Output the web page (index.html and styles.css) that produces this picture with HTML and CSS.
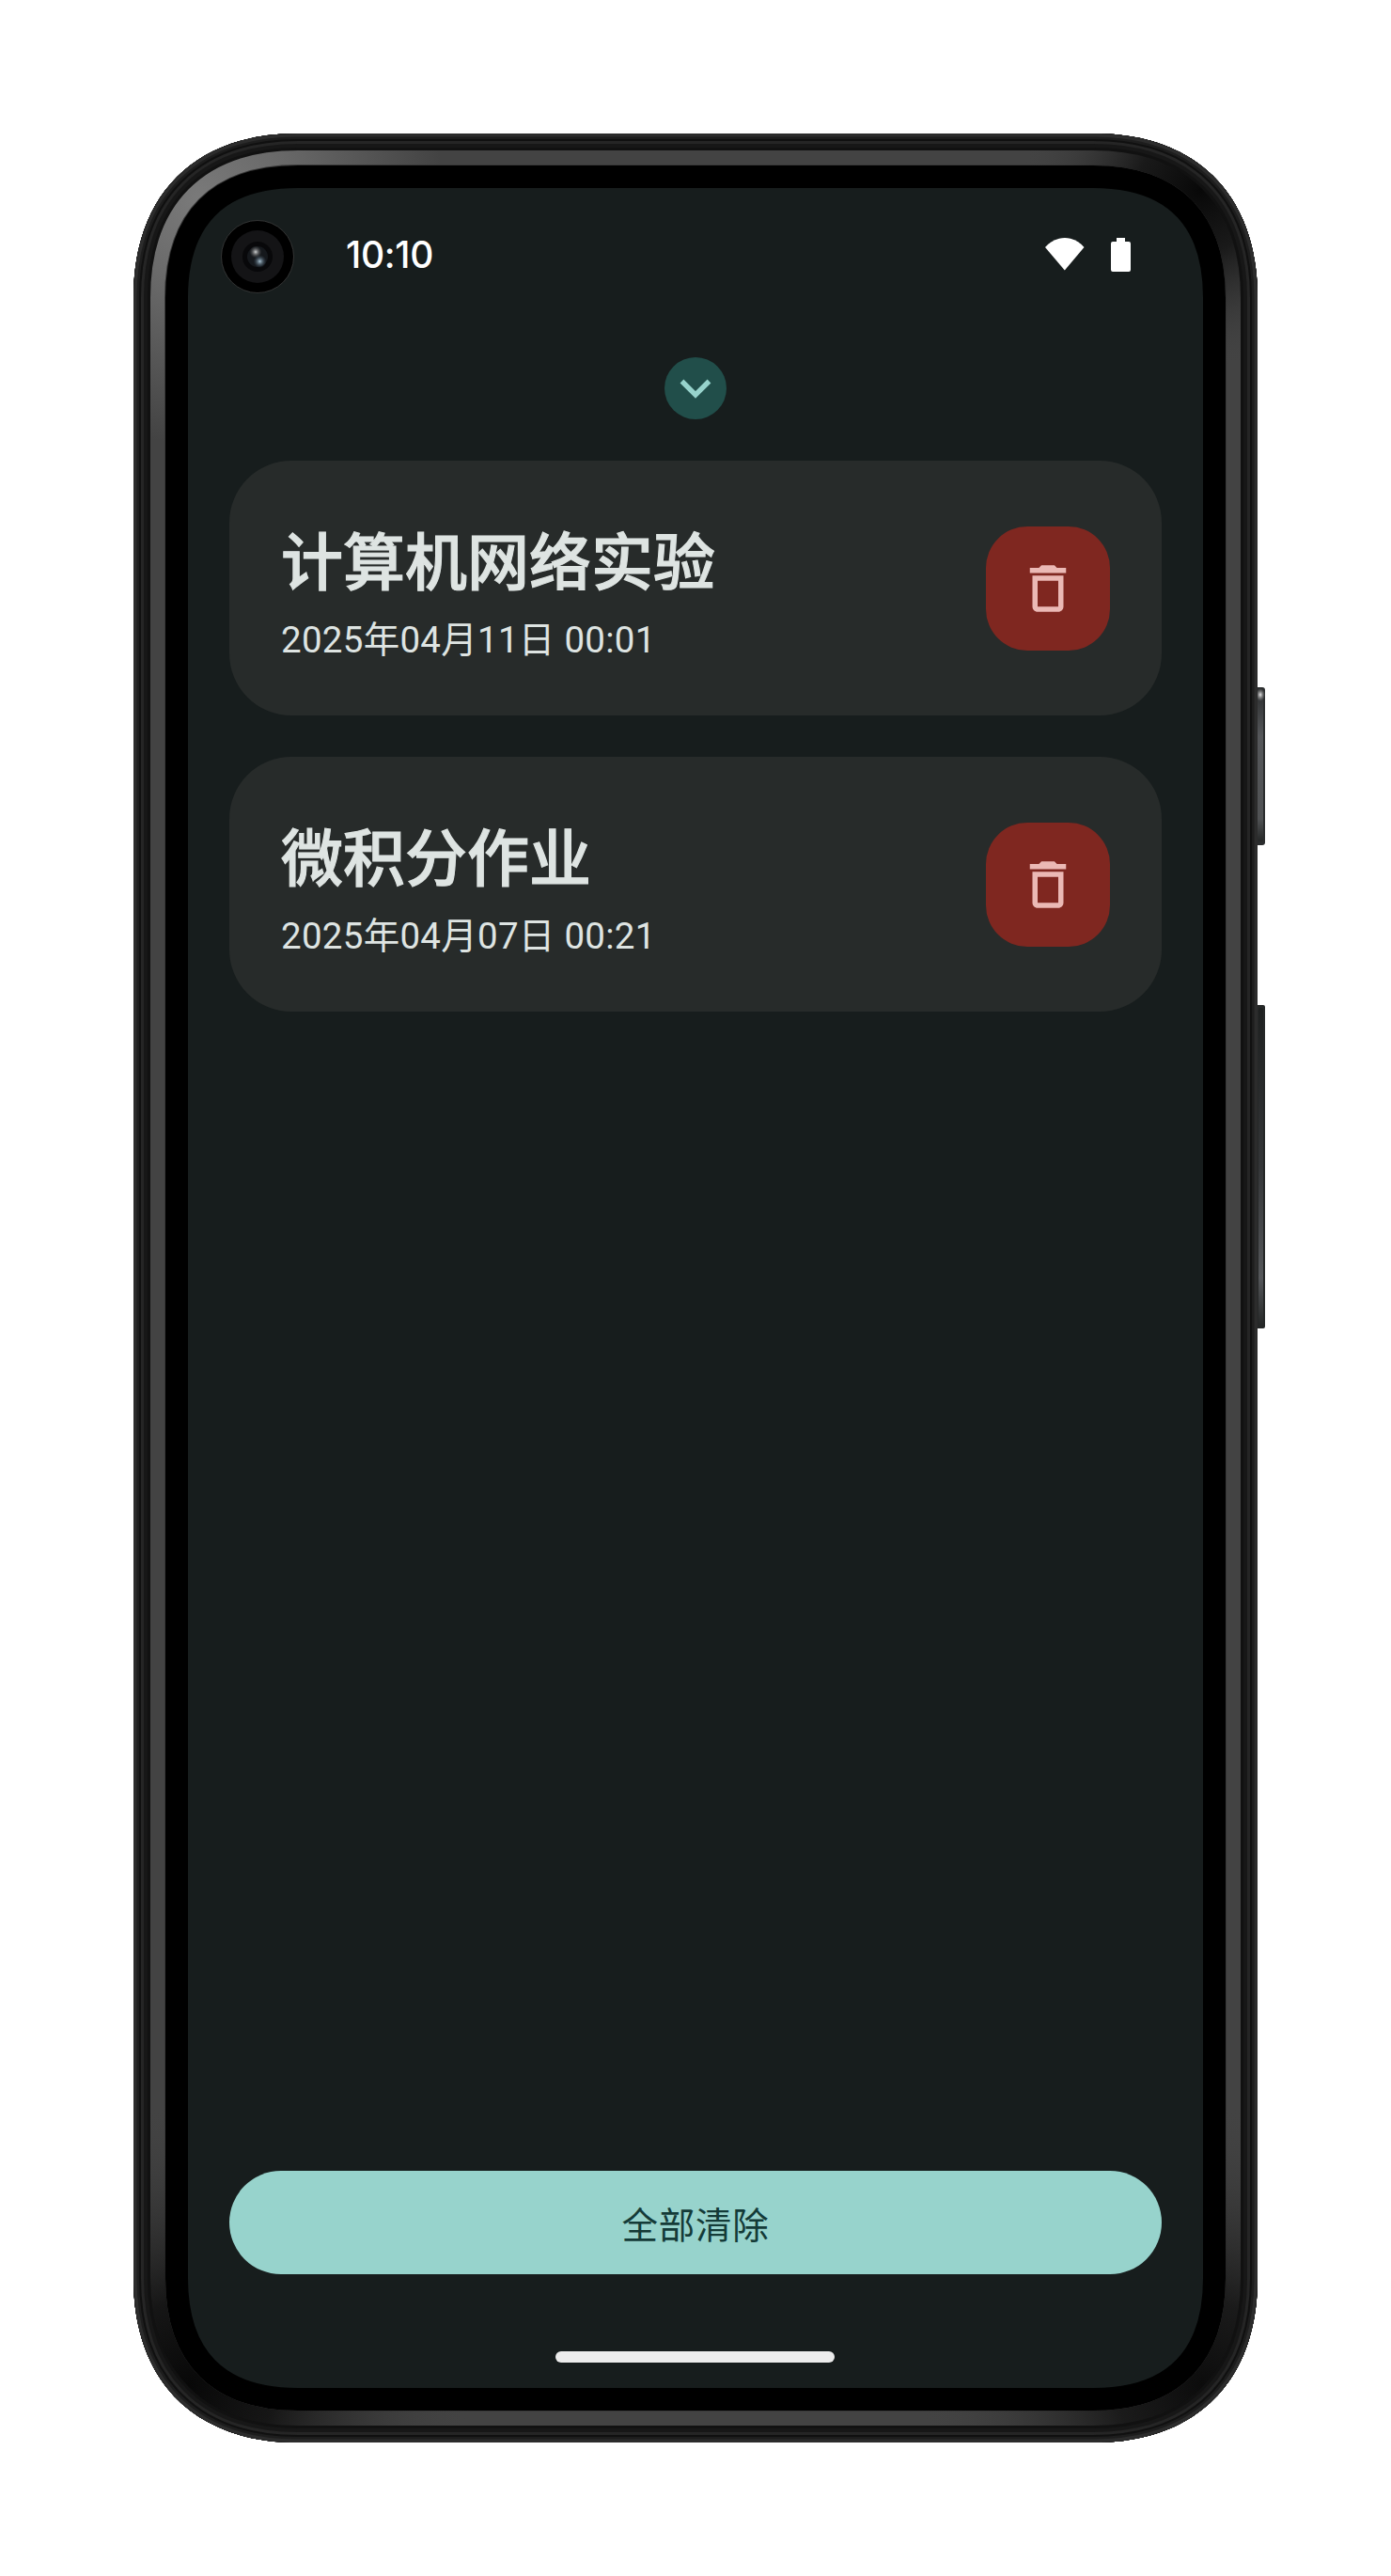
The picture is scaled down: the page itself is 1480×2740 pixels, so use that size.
FILE: index.html
```html
<!DOCTYPE html>
<html lang="zh-CN">
<head>
<meta charset="utf-8">
<title>全部清除</title>
<link rel="stylesheet" href="styles.css">
</head>
<body>
<div class="device">
  <svg class="frame" viewBox="0 0 1210 2456" aria-hidden="true">
    <defs>
      <path id="body" d="M175 0H1021C1131 0 1196 65 1196 175V2281C1196 2391 1131 2456 1021 2456H175C65 2456 0 2391 0 2281V175C0 65 65 0 175 0Z"/>
      <clipPath id="clip"><use href="#body"/></clipPath>
      <radialGradient id="light" gradientUnits="userSpaceOnUse" cx="70" cy="70" r="260"><stop offset="0" stop-color="#7a7a7a"/><stop offset=".35" stop-color="#6a6a6a"/><stop offset="1" stop-color="#434343"/></radialGradient>
      <radialGradient id="darkTop" gradientUnits="userSpaceOnUse" cx="1135" cy="60" r="190"><stop offset="0" stop-color="#080808"/><stop offset=".35" stop-color="#151515" stop-opacity=".9"/><stop offset="1" stop-color="#434343" stop-opacity="0"/></radialGradient>
      <radialGradient id="darkBottom" gradientUnits="userSpaceOnUse" cx="60" cy="2395" r="300"><stop offset="0" stop-color="#080808"/><stop offset=".3" stop-color="#111" stop-opacity=".9"/><stop offset="1" stop-color="#434343" stop-opacity="0"/></radialGradient>
      <radialGradient id="darkRight" gradientUnits="userSpaceOnUse" cx="1136" cy="2395" r="300"><stop offset="0" stop-color="#0c0c0c"/><stop offset=".3" stop-color="#161616" stop-opacity=".9"/><stop offset="1" stop-color="#434343" stop-opacity="0"/></radialGradient>
      <linearGradient id="key" x2="0" y2="1"><stop offset="0" stop-color="#2c2e2f"/><stop offset=".3" stop-color="#55575a"/><stop offset=".85" stop-color="#505254"/><stop offset="1" stop-color="#252727"/></linearGradient>
      <linearGradient id="rocker" x2="0" y2="1"><stop offset="0" stop-color="#1e2020"/><stop offset=".5" stop-color="#343638"/><stop offset=".85" stop-color="#55575a"/><stop offset="1" stop-color="#252727"/></linearGradient>
      <radialGradient id="glint"><stop offset="0" stop-color="#e8e8e8"/><stop offset="1" stop-color="#888" stop-opacity="0"/></radialGradient>
    </defs>
    <rect x="1190" y="589" width="14" height="168" rx="3" fill="#2b2d2e"/>
    <rect x="1196" y="593" width="6" height="160" rx="2" fill="url(#key)"/>
    <ellipse cx="1199" cy="597" rx="5" ry="7" fill="url(#glint)"/>
    <rect x="1190" y="927" width="14" height="344" rx="2" fill="#252727"/>
    <rect x="1197" y="930" width="5" height="338" rx="2" fill="url(#rocker)"/>
    <g clip-path="url(#clip)" fill="none">
      <use href="#body" fill="#171d1d"/>
      <use href="#body" stroke="#000" stroke-width="116"/>
      <use href="#body" stroke="#383838" stroke-width="68"/>
      <use href="#body" stroke="url(#light)" stroke-width="66"/>
      <use href="#body" stroke="url(#darkTop)" stroke-width="68"/>
      <use href="#body" stroke="url(#darkBottom)" stroke-width="68"/>
      <use href="#body" stroke="url(#darkRight)" stroke-width="68"/>
      <use href="#body" stroke="#111" stroke-width="36"/>
      <use href="#body" stroke="#171717" stroke-width="30"/>
      <use href="#body" stroke="#252525" stroke-width="22"/>
      <use href="#body" stroke="#101010" stroke-width="16"/>
      <use href="#body" stroke="#1d1d1d" stroke-width="12"/>
      <use href="#body" stroke="#2c2c2c" stroke-width="7"/>
    </g>
  </svg>

  <main class="screen">
    <svg class="camera" viewBox="0 0 78 78" aria-hidden="true">
      <defs>
        <radialGradient id="g1"><stop offset="0" stop-color="#d0d2d3"/><stop offset="1" stop-color="#555" stop-opacity="0"/></radialGradient>
        <radialGradient id="g2"><stop offset="0" stop-color="#a9c3d2"/><stop offset="1" stop-color="#345" stop-opacity="0"/></radialGradient>
      </defs>
      <circle cx="39" cy="39" r="38.500" fill="#000" stroke="#444" stroke-width=".7"/>
      <circle cx="39" cy="39" r="28" fill="#141416"/>
      <circle cx="39" cy="39" r="16" fill="#08080a"/>
      <circle cx="39" cy="39" r="11" fill="#15181c"/>
      <circle cx="37" cy="34" r="6.500" fill="url(#g1)"/>
      <circle cx="41.500" cy="44" r="7" fill="url(#g2)"/>
    </svg>
    <header class="status">
      <span class="clock">10:10</span>
      <span class="indicators">
        <svg class="wifi" viewBox="0 0 42 35"><path d="M0 10C12-3.200 30-3.200 41.500 10L20.800 34.500Z"/></svg>
        <svg class="battery" viewBox="0 0 21 36"><path d="M6 0H15V4H19Q21 4 21 6V34Q21 36 19 36H2Q0 36 0 34V6Q0 4 2 4H6Z"/></svg>
      </span>
    </header>
    <button class="collapse" aria-label="收起">
      <svg viewBox="0 0 66 66"><path d="M18.500 25.500 33 40 47.500 25.500" fill="none" stroke="#97d3cc" stroke-width="5.400"/></svg>
    </button>
    <section class="list">
      <article class="card">
        <div class="text"><h2>计算机网络实验</h2><p>2025年04月11日 00:01</p></div>
        <button class="delete" aria-label="删除"><svg viewBox="0 0 24 24"><path d="M6 19c0 1.100.9 2 2 2h8c1.100 0 2-.9 2-2V7H6v12zM8 9h8v10H8V9zm7.500-5-1-1h-5l-1 1H5v2h14V4z"/></svg></button>
      </article>
      <article class="card">
        <div class="text"><h2>微积分作业</h2><p>2025年04月07日 00:21</p></div>
        <button class="delete" aria-label="删除"><svg viewBox="0 0 24 24"><path d="M6 19c0 1.100.9 2 2 2h8c1.100 0 2-.9 2-2V7H6v12zM8 9h8v10H8V9zm7.500-5-1-1h-5l-1 1H5v2h14V4z"/></svg></button>
      </article>
    </section>
    <button class="clear">全部清除</button>
    <div class="home"></div>
  </main>
</div>
</body>
</html>
```
FILE: styles.css
```css
* { box-sizing: border-box; margin: 0; padding: 0; }
body {
  width: 1480px;
  height: 2740px;
  padding: 142px;
  background: #fff;
  font-family: Roboto, "Noto Sans CJK SC", sans-serif;
}
button { border: 0; font: inherit; }
svg { display: block; }
.device { position: relative; width: 1196px; height: 2456px; padding: 58px; }
.frame { position: absolute; left: 0; top: 0; width: 1210px; height: 2456px; }
.screen {
  position: relative;
  width: 1080px;
  height: 2340px;
  padding: 0 44px 27px;
  display: flex;
  flex-direction: column;
  align-items: center;
}
.camera { position: absolute; left: 35px; top: 34px; width: 78px; height: 78px; }
.status {
  align-self: stretch;
  height: 142px;
  padding: 0 33px 0 124px;
  display: flex;
  align-items: center;
  justify-content: space-between;
  color: #fff;
}
.clock { font: 500 39px/46px Inter, sans-serif; letter-spacing: -0.3px; }
.indicators { display: flex; gap: 28px; fill: #fff; }
.wifi { width: 42px; height: 35px; }
.battery { width: 21px; height: 36px; }
.collapse {
  width: 66px;
  height: 66px;
  margin-top: 38px;
  border-radius: 50%;
  background: #214e4a;
}
.list { align-self: stretch; margin-top: 44px; display: flex; flex-direction: column; gap: 44px; }
.card {
  height: 271px;
  padding: 0 55px;
  border-radius: 66px;
  background: #272b2a;
  color: #dee4e2;
  display: flex;
  align-items: center;
  justify-content: space-between;
}
.text { padding-top: 12px; }
.card h2 { font-size: 66px; line-height: 88px; font-weight: 500; -webkit-text-stroke: 1.1px currentColor; }
.card p { font-size: 38.5px; line-height: 55px; margin-top: 9px; letter-spacing: 0.27px; white-space: nowrap; }
.delete {
  width: 132px;
  height: 132px;
  border-radius: 44px;
  background: #7f2720;
  display: flex;
  align-items: center;
  justify-content: center;
}
.delete svg { width: 66px; height: 66px; fill: #ebb9b5; }
.clear {
  align-self: stretch;
  height: 110px;
  margin-top: auto;
  border-radius: 55px;
  background: #97d3cc;
  color: #143b38;
  font-size: 38.5px;
  letter-spacing: 0.8px;
}
.home { width: 297px; height: 12px; margin: 82px 1px 0 0; border-radius: 6px; background: #ececec; }
```
